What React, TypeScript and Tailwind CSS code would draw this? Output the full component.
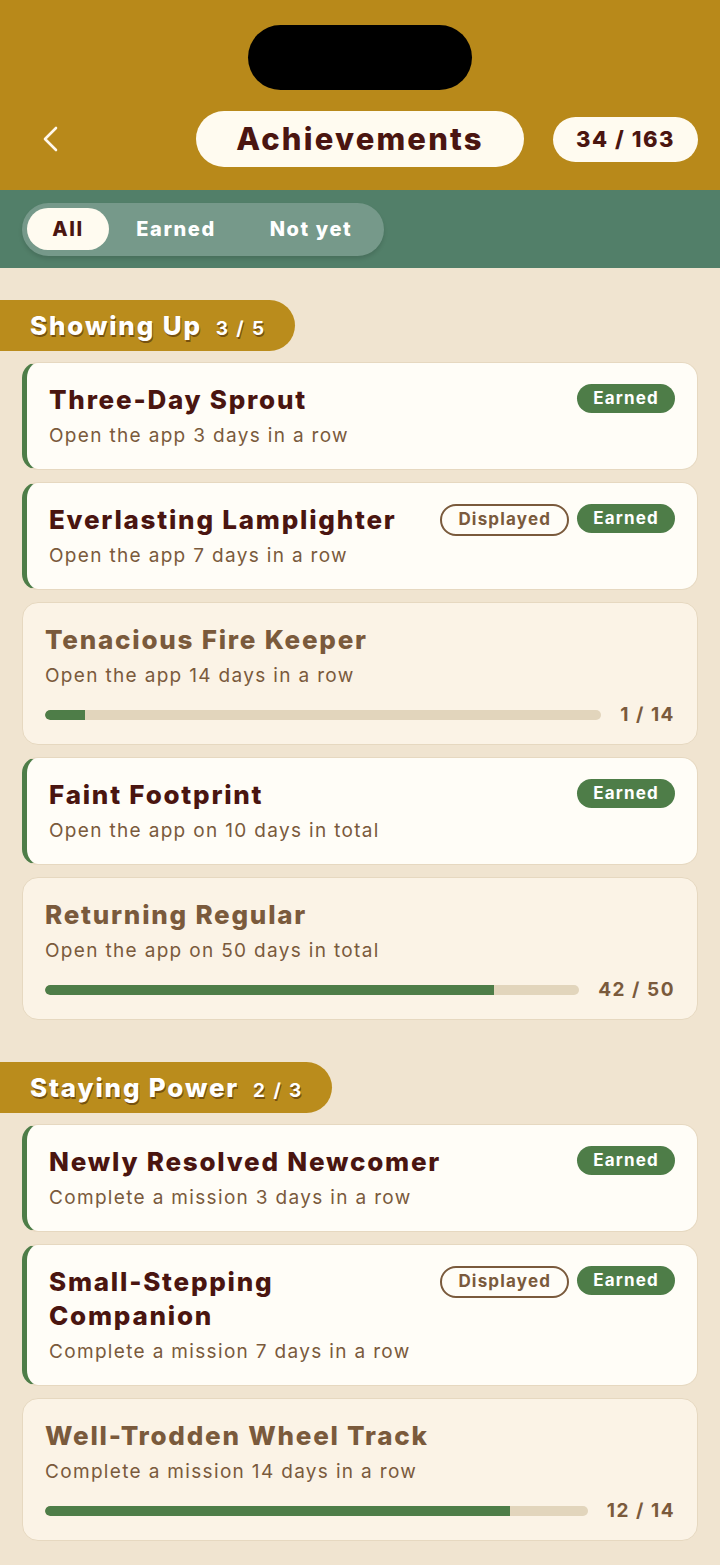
import React from "react";

type Item = {
  title: string;
  desc: string;
  earned: boolean;
  displayed?: boolean;
  progress?: [number, number];
};

const sections: { name: string; count: string; items: Item[] }[] = [
  {
    name: "Showing Up",
    count: "3 / 5",
    items: [
      { title: "Three-Day Sprout", desc: "Open the app 3 days in a row", earned: true },
      { title: "Everlasting Lamplighter", desc: "Open the app 7 days in a row", earned: true, displayed: true },
      { title: "Tenacious Fire Keeper", desc: "Open the app 14 days in a row", earned: false, progress: [1, 14] },
      { title: "Faint Footprint", desc: "Open the app on 10 days in total", earned: true },
      { title: "Returning Regular", desc: "Open the app on 50 days in total", earned: false, progress: [42, 50] },
    ],
  },
  {
    name: "Staying Power",
    count: "2 / 3",
    items: [
      { title: "Newly Resolved Newcomer", desc: "Complete a mission 3 days in a row", earned: true },
      { title: "Small-Stepping Companion", desc: "Complete a mission 7 days in a row", earned: true, displayed: true },
      { title: "Well-Trodden Wheel Track", desc: "Complete a mission 14 days in a row", earned: false, progress: [12, 14] },
    ],
  },
];

function Card({ item }: { item: Item }) {
  if (item.earned) {
    return (
      <div className="rounded-[16px] border border-[#E6D8C0] border-l-[5px] border-l-[#4E7D48] bg-[#FFFDF7] pl-[22px] pr-[22px] pt-[20px] pb-[20px]">
        <div className="flex items-start gap-[10px]">
          <div className="flex-1 min-w-0 text-[26px] leading-[34px] font-extrabold tracking-[0.068em] text-[#4A1510]">
            {item.title}
          </div>
          <div className="flex gap-[8px] shrink-0 mt-[1px]">
            {item.displayed && (
              <span className="rounded-full border-2 border-[#7A5A3C] bg-[#FFFDF7] px-[16px] h-[32px] flex items-center text-[17px] font-bold tracking-[0.07em] text-[#7A5A3C]">
                Displayed
              </span>
            )}
            <span className="rounded-full bg-[#4E7D48] px-[16px] h-[29px] flex items-center text-[17px] font-bold tracking-[0.07em] text-white">
              Earned
            </span>
          </div>
        </div>
        <div className="mt-[6px] text-[19px] leading-[26px] tracking-[0.07em] text-[#7A5A3C]">{item.desc}</div>
      </div>
    );
  }
  const [cur, tot] = item.progress!;
  const pct = (cur / tot) * 100;
  return (
    <div className="rounded-[16px] border border-[#E6D8C0] bg-[#FBF3E6] px-[22px] pt-[20px] pb-[19px]">
      <div className="text-[26px] leading-[34px] font-extrabold tracking-[0.068em] text-[#7A5A3C]">{item.title}</div>
      <div className="mt-[6px] text-[19px] leading-[26px] tracking-[0.07em] text-[#7A5A3C]">{item.desc}</div>
      <div className="mt-[16px] flex items-center gap-[19px] h-[20px]">
        <div className="flex-1 h-[10px] rounded-full bg-[#E2D5BC] overflow-hidden">
          <div className="h-full bg-[#4E7D48] rounded-l-full" style={{ width: `${pct}%` }} />
        </div>
        <div className="text-[19px] font-bold tracking-[0.08em] text-[#7A5A3C]">{`${cur} / ${tot}`}</div>
      </div>
    </div>
  );
}

export default function App() {
  return (
    <div className="min-h-[1565px] bg-[#F0E4D0]" style={{ fontFamily: "Inter, Roboto, 'Liberation Sans', sans-serif" }}>
      <div className="bg-[#B8891A] pt-[25px] pb-[23px]">
        <div className="mx-auto w-[224px] h-[65px] rounded-full bg-black" />
        <div className="mt-[21px] grid grid-cols-[1fr_auto_1fr] items-center">
          <div className="pl-[40px]">
            <svg width="20" height="28" viewBox="0 0 20 28" fill="none">
              <path d="M16 3 L5 14 L16 25" stroke="#FFF8EC" strokeWidth="2.6" strokeLinecap="round" strokeLinejoin="round" />
            </svg>
          </div>
          <div className="w-[328px] h-[56px] rounded-full bg-[#FFFBF0] flex items-center justify-center text-[31px] font-extrabold tracking-[0.07em] text-[#4A1510]">
            Achievements
          </div>
          <div className="flex justify-end pr-[22px]">
            <div className="w-[145px] h-[45px] rounded-full bg-[#FFFBF0] flex items-center justify-center text-[22px] font-extrabold tracking-[0.07em] text-[#4A1510]">
              34 / 163
            </div>
          </div>
        </div>
      </div>
      <div className="bg-[#527F69] h-[78px] pl-[22px] flex items-center">
        <div className="flex items-center h-[53px] w-[362px] rounded-full bg-[#76998A] px-[5px] shadow-[0_3px_4px_rgba(0,0,0,0.12)]">
          <div className="h-[42px] w-[82px] rounded-full bg-[#FFFBF0] flex items-center justify-center text-[20px] font-extrabold tracking-[0.08em] text-[#4A1510]">
            All
          </div>
          <div className="w-[134px] text-center text-[20px] font-extrabold tracking-[0.08em] text-white">Earned</div>
          <div className="w-[136px] text-center text-[20px] font-extrabold tracking-[0.08em] text-white">Not yet</div>
        </div>
      </div>
      <div className="pt-[32px] pb-[26px] flex flex-col gap-[42px]">
        {sections.map((s) => (
          <div key={s.name}>
            <div className="inline-flex h-[51px] items-center rounded-r-full bg-[#BA8C1C] pl-[30px] pr-[29px]">
              <div className="flex items-baseline">
                <span className="text-[26px] font-extrabold tracking-[0.07em] text-white [text-shadow:1px_2px_0_rgba(60,30,5,0.55)]">
                  {s.name}
                </span>
                <span className="ml-[14px] text-[19px] font-bold tracking-[0.1em] text-white [text-shadow:1px_2px_0_rgba(60,30,5,0.55)]">
                  {s.count}
                </span>
              </div>
            </div>
            <div className="mt-[11px] px-[22px] flex flex-col gap-[12px]">
              {s.items.map((it) => (
                <Card key={it.title} item={it} />
              ))}
            </div>
          </div>
        ))}
      </div>
    </div>
  );
}
